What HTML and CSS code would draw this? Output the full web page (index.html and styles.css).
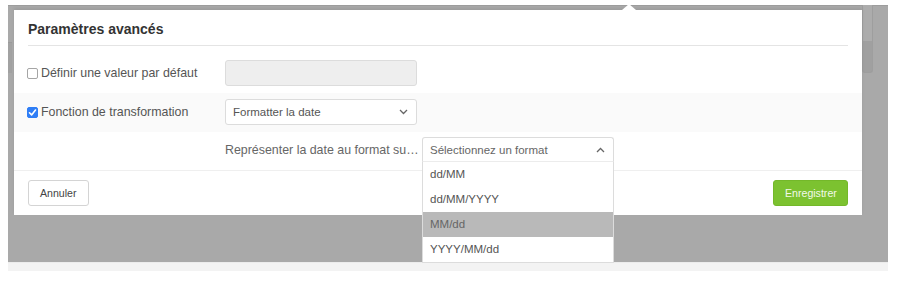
FILE: index.html
```html
<!DOCTYPE html>
<html lang="fr">
<head>
    <meta charset="UTF-8">
    <title>Paramètres avancés</title>
    <link rel="stylesheet" href="styles.css">
</head>
<body>

    <div class="backdrop">
        <!-- page content behind the overlay -->
        <div class="behind-left"></div>
        <div class="behind-right"></div>

        <div class="modal">
            <span class="notch"></span>

            <div class="modal-header">
                <h3>Paramètres avancés</h3>
            </div>

            <div class="row">
                <label class="check-label">
                    <span class="box"></span>Définir une valeur par défaut
                </label>
                <div class="field disabled"></div>
            </div>

            <div class="row shaded">
                <label class="check-label">
                    <span class="box checked">
                        <svg width="9" height="9" viewBox="0 0 9 9"><polyline points="1.5,4.8 3.6,6.9 7.5,2" fill="none" stroke="#fff" stroke-width="1.6" stroke-linecap="round" stroke-linejoin="round"/></svg>
                    </span>Fonction de transformation
                </label>
                <div class="field select">
                    <span>Formatter la date</span>
                    <svg width="9" height="6" viewBox="0 0 9 6"><polyline points="1,1 4.5,4.5 8,1" fill="none" stroke="#666" stroke-width="1.3"/></svg>
                </div>
            </div>

            <div class="row sub-row">
                <span class="sub-label">Représenter la date au format suivant</span>
                <div class="dropdown">
                    <div class="field select open">
                        <span class="placeholder">Sélectionnez un format</span>
                        <svg width="9" height="6" viewBox="0 0 9 6"><polyline points="1,5 4.5,1.5 8,5" fill="none" stroke="#666" stroke-width="1.3"/></svg>
                    </div>
                    <ul class="options">
                        <li>dd/MM</li>
                        <li>dd/MM/YYYY</li>
                        <li class="active">MM/dd</li>
                        <li>YYYY/MM/dd</li>
                    </ul>
                </div>
            </div>

            <div class="modal-footer">
                <button class="btn">Annuler</button>
                <button class="btn btn-save">Enregistrer</button>
            </div>
        </div>
    </div>

    <div class="strip"></div>

</body>
</html>
```

FILE: styles.css
```css
body {
    margin: 0;
    background: #fff;
    font-family: "Liberation Sans", Arial, sans-serif;
    color: #555;
}
.backdrop {
    position: relative;
    width: 880px;
    height: 257px;
    margin: 5px 0 0 8px;
    padding: 5px 26px 0 6px;
    box-sizing: border-box;
    background: #a9a9a9;
    border-top: 1px solid #9d9d9d;
}
.behind-left {
    position: absolute;
    left: 0;
    top: 36px;
    width: 4px;
    height: 30px;
    background: #a2a2a2;
    border-top: 1px solid #9b9b9b;
}
.behind-right {
    position: absolute;
    left: 854px;
    top: -1px;
    width: 9px;
    height: 67px;
    background: linear-gradient(#acacac 0, #acacac 36px, #a0a0a0 36px);
    border: 1px solid #9e9e9e;
    border-top: none;
    border-radius: 0 0 3px 3px;
}
.modal {
    position: relative;
    width: 848px;
    height: 205px;
    margin-top: -1px;
    background: #fff;
    box-shadow: 0 -2px 3px rgba(0, 0, 0, 0.08);
}
.notch {
    position: absolute;
    left: 608px;
    top: -6px;
    border-left: 7px solid transparent;
    border-right: 7px solid transparent;
    border-bottom: 6px solid #fff;
}
.modal-header {
    padding: 0 14px;
}
.modal-header h3 {
    margin: 0;
    padding: 10px 0 7px;
    line-height: 18px;
    font-size: 14px;
    font-weight: bold;
    color: #333;
    border-bottom: 1px solid #e4e4e4;
}
.row {
    display: flex;
    align-items: center;
    padding: 14px 14px 7px;
}
.row.shaded {
    background: #fafafa;
    padding: 6px 14px 7px;
}
.row.sub-row {
    padding: 5px 14px 8px;
}
.check-label {
    display: flex;
    align-items: center;
    width: 197px;
    font-size: 12.4px;
    color: #555;
}
.box {
    display: inline-flex;
    align-items: center;
    justify-content: center;
    width: 9px;
    height: 9px;
    margin: 0 3px 0 -1px;
    border: 1px solid #a5a5a5;
    border-radius: 2px;
    background: #fff;
}
.box.checked {
    background: #2f7ef6;
    border-color: #2f7ef6;
}
.field {
    width: 192px;
    height: 26px;
    box-sizing: border-box;
    border: 1px solid #dcdcdc;
    border-radius: 3px;
    background: #fff;
}
.field.disabled {
    background: #eeeeee;
}
.select {
    display: flex;
    align-items: center;
    justify-content: space-between;
    padding: 0 8px 0 7px;
    font-size: 11.5px;
    color: #555;
}
.select.open {
    height: 25px;
    border-radius: 3px 3px 0 0;
    border-bottom-color: #ececec;
}
.placeholder {
    color: #666;
}
.sub-label {
    flex-shrink: 0;
    width: 195px;
    margin-left: 197px;
    font-size: 12.4px;
    color: #666;
    white-space: nowrap;
    overflow: hidden;
    text-overflow: ellipsis;
}
.dropdown {
    position: relative;
    margin-left: 2px;
}
.options {
    position: absolute;
    left: 0;
    top: 25px;
    z-index: 2;
    width: 192px;
    margin: 0;
    padding: 0;
    box-sizing: border-box;
    list-style: none;
    background: #fff;
    border: 1px solid #dcdcdc;
    border-top: none;
}
.options li {
    height: 25px;
    line-height: 24px;
    padding: 0 7px;
    font-size: 11.5px;
    color: #555;
}
.options li.active {
    background: #b9b9b9;
    color: #666;
}
.modal-footer {
    display: flex;
    justify-content: space-between;
    padding: 9px 14px;
    border-top: 1px solid #efefef;
}
.btn {
    height: 26px;
    padding: 0 11px;
    font-family: "Liberation Sans", Arial, sans-serif;
    font-size: 10.6px;
    color: #444;
    background: #fff;
    border: 1px solid #d4d4d4;
    border-radius: 3px;
}
.btn-save {
    width: 75px;
    color: #f2f9ea;
    background: #7cc230;
    border-color: #74b82a;
}
.strip {
    width: 880px;
    height: 8px;
    margin-left: 8px;
    background: #f3f3f3;
    border-top: 1px solid #ececec;
}
```
